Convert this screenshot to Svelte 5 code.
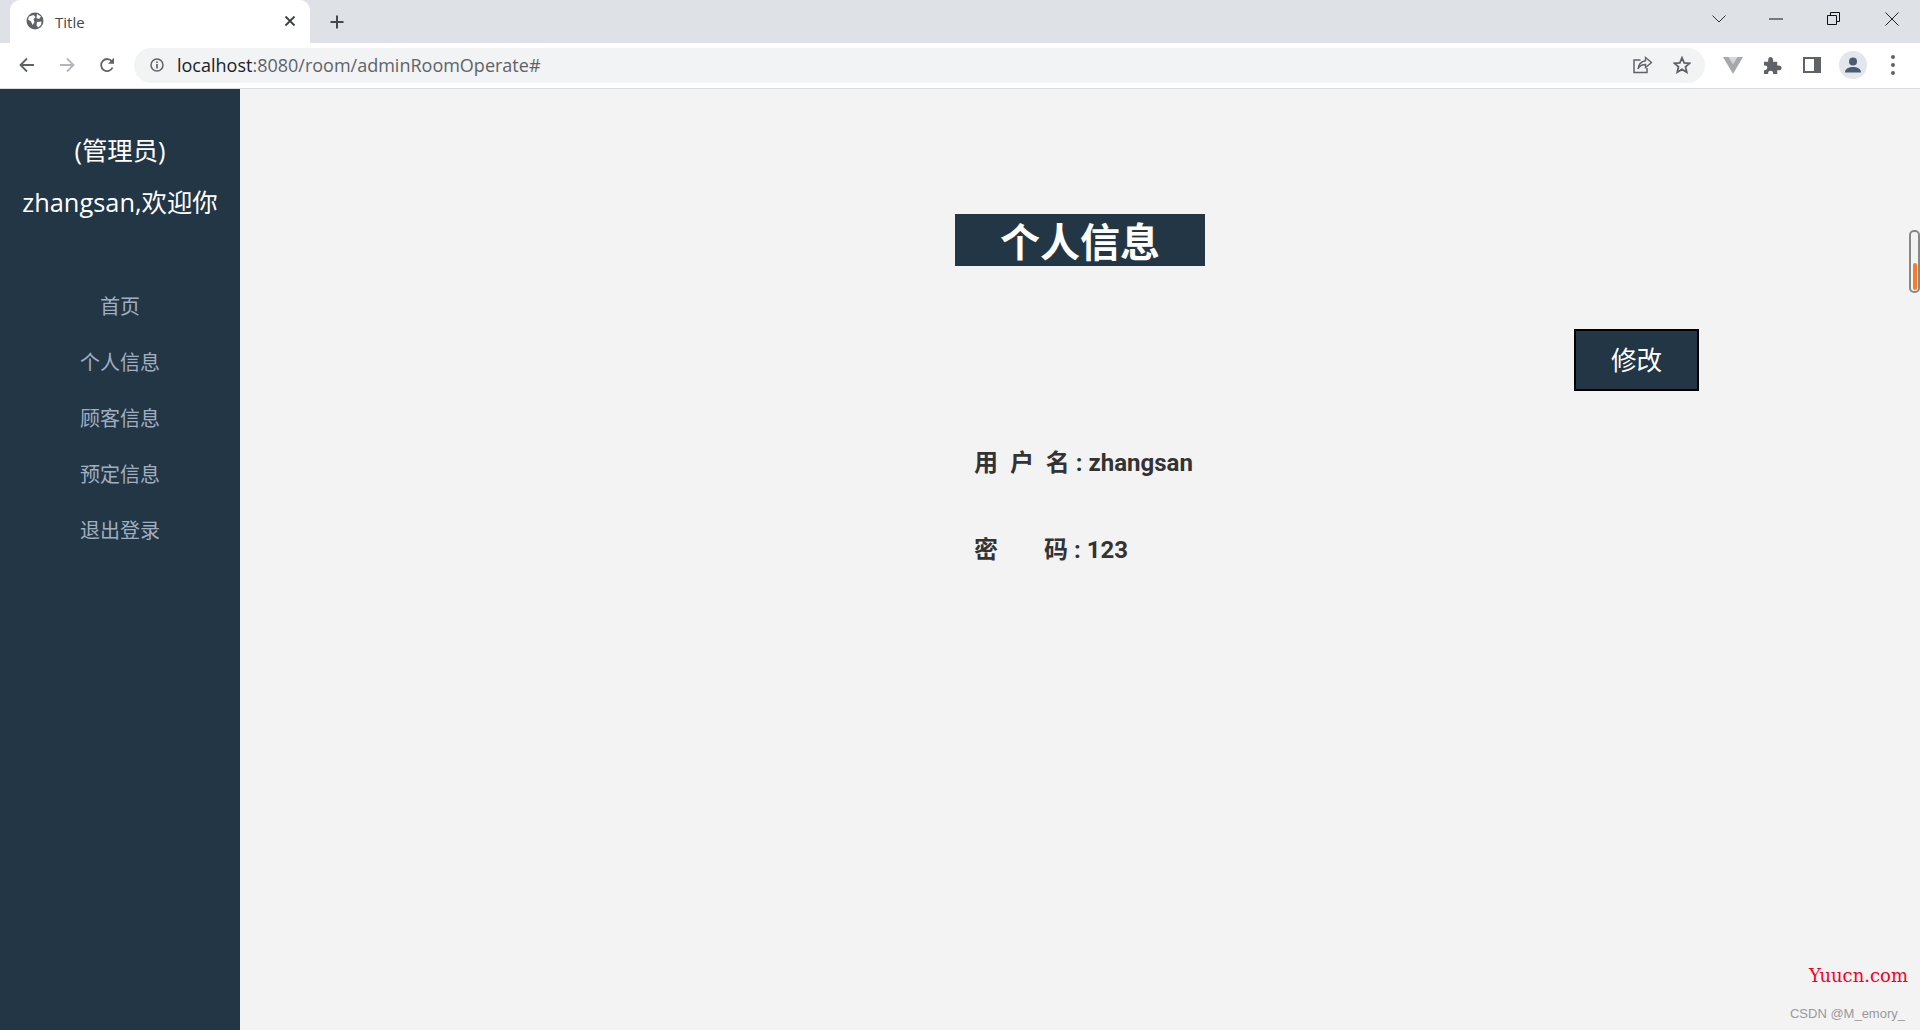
<script>
    let menu = ["首页", "个人信息", "顾客信息", "预定信息", "退出登录"];
</script>

<div class="page">
    <header class="tabstrip">
        <div class="tab">
            <svg class="globe" viewBox="0 0 18 18" width="18" height="18">
                <circle cx="9" cy="9" r="8.5" fill="#5f6368" />
                <path d="M3 4.5 L7.5 3 L9.5 5 L7.5 7.5 L8.5 10 L6.5 13 L5 9.5 L2 7.5 Z M11 2 L15 4.5 L13 7 L10.5 6 Z M11 10 L15.5 9.5 L15 13 L12 15.5 L10.5 13 Z" fill="#fff" />
            </svg>
            <span class="tab-title">Title</span>
            <svg class="tab-close" viewBox="0 0 12 12" width="12" height="12">
                <path d="M1.5 1.5 L10.5 10.5 M10.5 1.5 L1.5 10.5" stroke="#3c4043" stroke-width="1.8" />
            </svg>
        </div>
        <svg class="new-tab" viewBox="0 0 14 14" width="14" height="14">
            <path d="M7 0.5 V13.5 M0.5 7 H13.5" stroke="#45494d" stroke-width="2" />
        </svg>
        <div class="win-controls">
            <svg class="win-chevron" viewBox="0 0 14 8" width="14" height="8">
                <path d="M0.5 0.5 L7 7 L13.5 0.5" fill="none" stroke="#333" />
            </svg>
            <svg class="win-min" viewBox="0 0 14 2" width="14" height="2">
                <path d="M0 1 H14" stroke="#111" />
            </svg>
            <svg class="win-max" viewBox="0 0 13 13" width="13" height="13">
                <path d="M0.5 3.5 H9.5 V12.5 H0.5 Z M3.5 3.5 V0.5 H12.5 V9.5 H9.5" fill="none" stroke="#111" />
            </svg>
            <svg class="win-close" viewBox="0 0 14 14" width="14" height="14">
                <path d="M0.5 0.5 L13.5 13.5 M13.5 0.5 L0.5 13.5" stroke="#222" />
            </svg>
        </div>
    </header>

    <div class="toolbar">
        <svg class="nav-icon" viewBox="0 0 16 16" width="16" height="16">
            <path d="M15 8 H2 M8 1.5 L1.5 8 L8 14.5" fill="none" stroke="#5f6368" stroke-width="1.8" />
        </svg>
        <svg class="nav-icon" viewBox="0 0 16 16" width="16" height="16">
            <path d="M1 8 H14 M8 1.5 L14.5 8 L8 14.5" fill="none" stroke="#b4b7ba" stroke-width="1.8" />
        </svg>
        <svg class="nav-icon" viewBox="0 0 16 16" width="16" height="16">
            <path d="M13.6 10.5 A6 6 0 1 1 13 4.5" fill="none" stroke="#5f6368" stroke-width="1.8" />
            <path d="M15 0.8 V6.8 H9 Z" fill="#5f6368" />
        </svg>
        <div class="omnibox">
            <svg class="info" viewBox="0 0 14 14" width="14" height="14">
                <circle cx="7" cy="7" r="6" fill="none" stroke="#5f6368" stroke-width="1.5" />
                <path d="M7 6 V10.5 M7 3.4 V5" stroke="#5f6368" stroke-width="1.7" />
            </svg>
            <span class="url"><span class="host">localhost</span>:8080/room/adminRoomOperate#</span>
            <svg class="share" viewBox="0 0 20 18" width="20" height="18">
                <path d="M7.5 4 H1 V16.5 H14 V12" fill="none" stroke="#5f6368" stroke-width="1.5" />
                <path d="M12.5 1.5 L18.5 6.5 L12.5 11.5 V8.5 C9 8.5 6.5 10 5 13 C5.5 8.5 8 5.5 12.5 4.8 Z" fill="none" stroke="#5f6368" stroke-width="1.4" />
            </svg>
            <svg class="star" viewBox="0 0 20 20" width="18" height="18">
                <path d="M10 2 L12.4 7.6 L18.5 8.1 L13.9 12.1 L15.3 18 L10 14.9 L4.7 18 L6.1 12.1 L1.5 8.1 L7.6 7.6 Z" fill="none" stroke="#5f6368" stroke-width="2" />
            </svg>
        </div>
        <svg class="ext vue" viewBox="0 0 20 17" width="20" height="17">
            <path d="M0 0 H20 L10 17 Z" fill="#a6a9ac" />
            <path d="M5.5 0 H14.5 L10 7.5 Z" fill="#d5d7d9" />
        </svg>
        <svg class="ext puzzle" viewBox="0 0 20 20" width="19" height="19">
            <path d="M1 6 H5.5 C5 2 6.5 1 8 1 C9.5 1 11 2 10.5 6 H15 V10 C18.5 9.5 19.5 11 19.5 12.5 C19.5 14 18.5 15.5 15 15 V19 H10.5 C11 16.5 9.5 15.5 8 15.5 C6.5 15.5 5 16.5 5.5 19 H1 V15 C3.5 15 4.5 13.5 4.5 12 C4.5 10.5 3.5 9.5 1 10 Z" fill="#5f6368" />
        </svg>
        <svg class="ext panel" viewBox="0 0 18 16" width="18" height="16">
            <path fill-rule="evenodd" d="M0 0 H18 V16 H0 Z M2 2 V14 H11 V2 Z" fill="#5f6368" />
        </svg>
        <div class="avatar">
            <svg viewBox="0 0 18 16" width="18" height="16">
                <circle cx="9" cy="4.5" r="4" fill="#4c5b73" />
                <path d="M1 15.5 C1 11.5 5 10 9 10 C13 10 17 11.5 17 15.5 Z" fill="#4c5b73" />
            </svg>
        </div>
        <div class="dots"><i></i><i></i><i></i></div>
    </div>

    <div class="body-row">
        <aside class="sidebar">
            <div class="welcome">
                <div>(管理员)</div>
                <div>zhangsan,欢迎你</div>
            </div>
            <ul>
                {#each menu as item}
                    <li>{item}</li>
                {/each}
            </ul>
        </aside>

        <main class="content">
            <h1>个人信息</h1>
            <div class="actions">
                <button>修改</button>
            </div>
            <div class="info-list">
                <p>用&nbsp;&nbsp;户&nbsp;&nbsp;名 : zhangsan</p>
                <p>密<span class="gap"></span>码 : 123</p>
            </div>

            <div class="scroll-widget"><span></span></div>
            <div class="mark-site">Yuucn.com</div>
            <div class="mark-csdn">CSDN @M_emory_</div>
        </main>
    </div>
</div>

<style>
    :global(body) {
        margin: 0;
        background-color: #f3f3f4;
    }

    .page {
        height: 1030px;
        display: flex;
        flex-direction: column;
        overflow: hidden;
        font-family: "Open Sans", "Noto Sans CJK SC", sans-serif;
    }

    /* Barra del navegador */
    .tabstrip {
        height: 43px;
        background-color: #dee1e6;
        display: flex;
        align-items: flex-end;
        padding-left: 10px;
        box-sizing: border-box;
    }

    .tab {
        width: 300px;
        height: 43px;
        box-sizing: border-box;
        padding: 0 14px 0 16px;
        background-color: #fff;
        border-radius: 10px 10px 0 0;
        display: flex;
        align-items: center;
    }

    .globe {
        margin-top: -2px;
    }

    .tab-title {
        font-size: 15px;
        color: #45494d;
        margin-left: 11px;
        flex: 1;
    }

    .tab-close {
        margin-top: -2px;
    }

    .new-tab {
        margin: 0 0 14px 20px;
    }

    .win-controls {
        margin-left: auto;
        height: 43px;
        display: flex;
        align-items: center;
    }

    .win-controls svg {
        margin-top: -6px;
    }

    .win-chevron {
        margin-right: 43px;
    }

    .win-min {
        margin-right: 44px;
    }

    .win-max {
        margin-right: 45px;
    }

    .win-close {
        margin-right: 21px;
    }

    .toolbar {
        height: 46px;
        background-color: #fff;
        border-bottom: 1px solid #dadce0;
        box-sizing: border-box;
        display: flex;
        align-items: center;
        padding: 0 0 1px 19px;
    }

    .nav-icon {
        margin-right: 24px;
    }

    .omnibox {
        width: 1571px;
        height: 35px;
        margin-left: -5px;
        box-sizing: border-box;
        background-color: #f1f3f4;
        border-radius: 18px;
        display: flex;
        align-items: center;
        padding: 0 14px 0 16px;
    }

    .url {
        font-size: 18px;
        color: #5f6368;
        margin-left: 13px;
        flex: 1;
    }

    .host {
        color: #202124;
    }

    .star {
        margin-left: 20px;
    }

    .ext {
        flex: none;
    }

    .vue {
        margin-left: 18px;
    }

    .puzzle {
        margin-left: 20px;
    }

    .panel {
        margin-left: 21px;
    }

    .avatar {
        width: 28px;
        height: 28px;
        border-radius: 50%;
        background-color: #e3e6ea;
        margin-left: 18px;
        display: flex;
        align-items: center;
        justify-content: center;
    }

    .dots {
        margin-left: 24px;
        display: flex;
        flex-direction: column;
        gap: 4px;
    }

    .dots i {
        display: block;
        width: 4px;
        height: 4px;
        border-radius: 50%;
        background-color: #5f6368;
    }

    /* Diseño principal */
    .body-row {
        flex: 1;
        display: flex;
        min-height: 0;
    }

    .sidebar {
        width: 240px;
        flex: none;
        background-color: #233646;
        text-align: center;
    }

    .welcome {
        padding-top: 35px;
        color: #fff;
        font-size: 25.4px;
        line-height: 52px;
    }

    .sidebar ul {
        list-style-type: none;
        margin: 51px 0 0;
        padding: 0;
    }

    .sidebar li {
        height: 56px;
        line-height: 56px;
        font-size: 20px;
        color: #a0aec0;
    }

    .content {
        flex: 1;
        position: relative;
        background-color: #f3f3f4;
    }

    h1 {
        width: 250px;
        height: 52px;
        margin: 125px auto 0;
        background-color: #233646;
        color: #fff;
        font-size: 40px;
        font-weight: 700;
        line-height: 56px;
        text-align: center;
    }

    .actions {
        display: flex;
        justify-content: flex-end;
        margin-top: 63px;
        padding-right: 221px;
    }

    button {
        width: 125px;
        height: 62px;
        box-sizing: border-box;
        background-color: #233646;
        border: 2px solid #000;
        color: #fff;
        font-family: inherit;
        font-size: 25.6px;
        padding: 0 0 3px;
    }

    .info-list {
        margin: 56px 0 0 734px;
    }

    .info-list p {
        margin: 0 0 54px;
        font-family: Roboto, "Noto Sans CJK SC", sans-serif;
        font-size: 24px;
        font-weight: 700;
        line-height: 33px;
        color: #333;
    }

    .gap {
        display: inline-block;
        width: 46px;
    }

    /* Elementos superpuestos */
    .scroll-widget {
        position: absolute;
        right: 0;
        top: 141px;
        width: 11px;
        height: 63px;
        box-sizing: border-box;
        border: 2px solid #888;
        border-radius: 5px;
        display: flex;
        align-items: flex-end;
        justify-content: center;
        padding-bottom: 1px;
    }

    .scroll-widget span {
        width: 4px;
        height: 27px;
        border-radius: 2px;
        background-color: #fb7a24;
    }

    .mark-site {
        position: absolute;
        right: 12px;
        bottom: 44px;
        font-family: "DejaVu Serif", serif;
        font-size: 18px;
        color: #f5001e;
    }

    .mark-csdn {
        position: absolute;
        right: 15px;
        bottom: 9px;
        font-family: "Liberation Sans", sans-serif;
        font-size: 13px;
        color: #999;
    }
</style>
